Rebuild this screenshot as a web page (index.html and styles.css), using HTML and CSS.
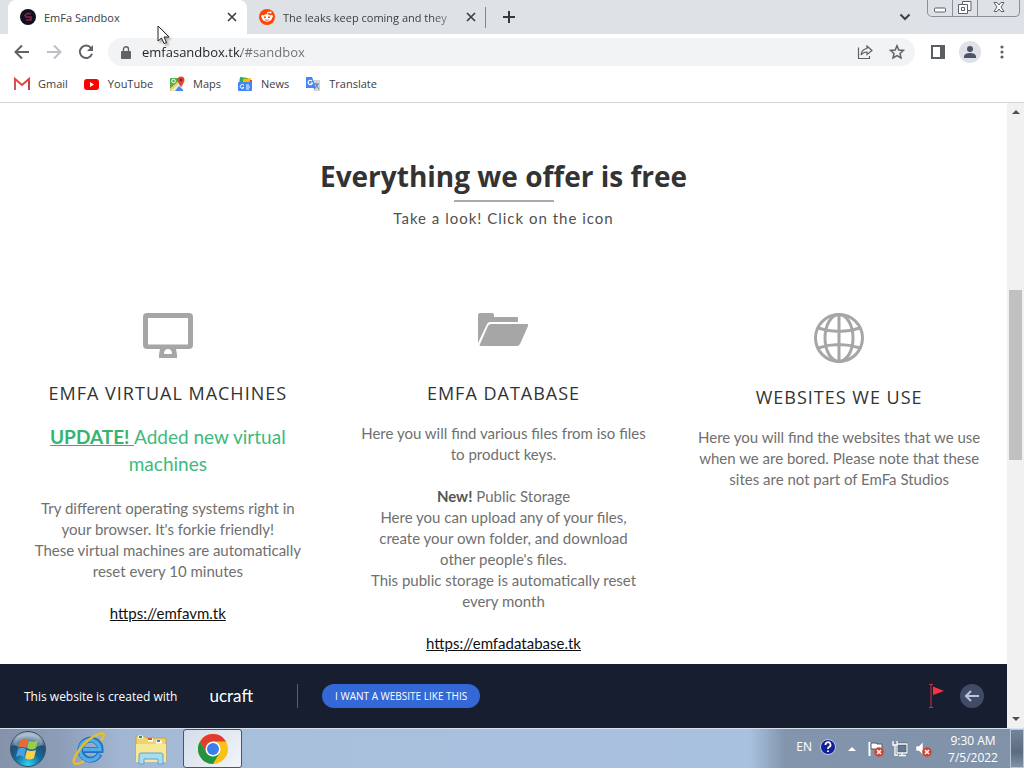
FILE: index.html
```html
<!DOCTYPE html>
<html lang="en">
<head>
    <meta charset="UTF-8">
    <meta name="viewport" content="width=device-width, initial-scale=1.0">
    <title>EmFa Sandbox</title>
    <link rel="stylesheet" href="styles.css">
</head>
<body>
    <header class="tabstrip">
        <div class="tab tab-active">
            <svg class="favicon" width="16" height="16" viewBox="0 0 16 16"><circle cx="8" cy="8" r="8" fill="#10101f"/><path d="M11 4.500H7.500L5 6.500L6 8H11V11H6" fill="none" stroke="#8c2445" stroke-width="1.500"/></svg>
            <span class="tab-title">EmFa Sandbox</span>
            <button class="tab-close" aria-label="Close tab"><svg width="10" height="10" viewBox="0 0 10 10"><path d="M1 1L9 9M9 1L1 9" stroke="#3c4043" stroke-width="1.700"/></svg></button>
        </div>
        <div class="tab">
            <svg class="favicon" width="16" height="16" viewBox="0 0 16 16"><circle cx="8" cy="8" r="8" fill="#ff4500"/><path d="M8 5.500L9 3L11 3.500" fill="none" stroke="#fff"/><circle cx="11.500" cy="3.500" r="1.100" fill="#fff"/><circle cx="3.500" cy="7.500" r="1.400" fill="#fff"/><circle cx="12.500" cy="7.500" r="1.400" fill="#fff"/><ellipse cx="8" cy="9" rx="5" ry="3.700" fill="#fff"/><circle cx="6" cy="8.300" r="1" fill="#ff4500"/><circle cx="10" cy="8.300" r="1" fill="#ff4500"/><path d="M6 10.700Q8 12 10 10.700" fill="none" stroke="#ff4500" stroke-width=".8"/></svg>
            <span class="tab-title tab-fade">The leaks keep coming and they</span>
            <button class="tab-close" aria-label="Close tab"><svg width="10" height="10" viewBox="0 0 10 10"><path d="M1 1L9 9M9 1L1 9" stroke="#3c4043" stroke-width="1.700"/></svg></button>
        </div>
        <button class="new-tab" aria-label="New tab"><svg width="12" height="12" viewBox="0 0 12 12"><path d="M6 0V12M0 6H12" stroke="#35383c" stroke-width="2"/></svg></button>
        <button class="tab-search" aria-label="Search tabs"><svg width="12" height="8" viewBox="0 0 12 8"><path d="M1.500 1.500L6 6L10.500 1.500" fill="none" stroke="#3c4043" stroke-width="2"/></svg></button>
        <div class="window-buttons">
            <button aria-label="Minimize"><svg width="12" height="18" viewBox="0 0 12 18"><rect x=".5" y="9" width="11" height="4" rx="1" fill="#fff" stroke="#5b616b"/></svg></button>
            <button aria-label="Restore"><svg width="14" height="18" viewBox="0 0 14 18"><path d="M4.500 2.500H13V11.500H9.500V14.500H.5V5.500H4.500Z" fill="#fff" stroke="#5b616b"/><path d="M4.500 5.500H9.500V11.500M3.500 8.500H6.500V11.500H3.500Z" fill="none" stroke="#5b616b"/></svg></button>
            <button class="window-close" aria-label="Close"><svg width="12" height="18" viewBox="0 0 12 18"><path d="M1 3.500H4L6 6L8 3.500H11L8 8L11 12.500H8L6 10L4 12.500H1L4 8Z" fill="#fff" stroke="#5b616b"/></svg></button>
        </div>
    </header>

    <nav class="toolbar">
        <button aria-label="Back"><svg width="16" height="16" viewBox="0 0 16 16"><path d="M15 8H2M8 1.500L1.500 8L8 14.500" fill="none" stroke="#5f6368" stroke-width="2"/></svg></button>
        <button aria-label="Forward"><svg width="16" height="16" viewBox="0 0 16 16"><path d="M1 8H14M8 1.500L14.500 8L8 14.500" fill="none" stroke="#bdc1c6" stroke-width="2"/></svg></button>
        <button aria-label="Reload"><svg width="16" height="16" viewBox="0 0 16 16"><path d="M13 4A6.200 6.200 0 1 0 14 9.700" fill="none" stroke="#5f6368" stroke-width="2"/><path d="M15 1V7H9Z" fill="#5f6368"/></svg></button>
        <div class="omnibox">
            <svg width="10" height="13" viewBox="0 0 10 13"><rect y="5" width="10" height="8" rx="1" fill="#5f6368"/><path d="M2.500 5V3.300A2.500 2.500 0 0 1 7.500 3.300V5" fill="none" stroke="#5f6368" stroke-width="1.400"/></svg>
            <input class="url" type="text" aria-label="Address" value="emfasandbox.tk/#sandbox">
            <button aria-label="Share"><svg width="16" height="16" viewBox="0 0 16 16"><path d="M1.500 3.500V14.500H12.500V12" fill="none" stroke="#5f6368" stroke-width="1.200"/><path d="M10 2L15 6.500L10 10.500V8Q6 8 4 11Q4.500 5.500 10 4.500Z" fill="none" stroke="#5f6368" stroke-width="1.200"/></svg></button>
            <button aria-label="Bookmark"><svg width="16" height="16" viewBox="0 0 16 16"><path d="M8 1.700L9.800 6L14.500 6.400L11 9.500L12 14L8 11.600L4 14L5 9.500L1.500 6.400L6.200 6Z" fill="none" stroke="#5f6368" stroke-width="1.500"/></svg></button>
        </div>
        <button class="side-panel" aria-label="Side panel"><svg width="14" height="14" viewBox="0 0 14 14"><rect x="1" y="1" width="12" height="12" fill="none" stroke="#5a5d62" stroke-width="2"/><rect x="9" y="1" width="4" height="12" fill="#5a5d62"/></svg></button>
        <button class="profile" aria-label="Profile"><svg width="22" height="22" viewBox="0 0 22 22"><circle cx="11" cy="11" r="11" fill="#dfe1e6"/><circle cx="11" cy="8" r="3" fill="#4c5365"/><path d="M5 17V15Q6 12 11 12T17 15V17Z" fill="#4c5365"/></svg></button>
        <button class="menu" aria-label="Menu"><svg width="4" height="14" viewBox="0 0 4 14" fill="#5f6368"><circle cx="2" cy="2" r="1.600"/><circle cx="2" cy="7" r="1.600"/><circle cx="2" cy="12" r="1.600"/></svg></button>
    </nav>

    <nav class="bookmarks">
        <a href="#gmail"><svg width="16" height="16" viewBox="0 0 16 16"><path d="M1 14V3L8 9L15 3V14" fill="none" stroke="#ea4335" stroke-width="2"/><path d="M1 5V14" stroke="#c75667" stroke-width="2"/><path d="M15 5V14" stroke="#b44b50" stroke-width="2"/></svg>Gmail</a>
        <a href="#youtube"><svg width="16" height="16" viewBox="0 0 16 16"><rect x="0" y="3" width="15" height="11" rx="3" fill="#f00"/><path d="M6 6L10 8.500L6 11Z" fill="#fff"/></svg>YouTube</a>
        <a href="#maps"><svg width="16" height="16" viewBox="0 0 16 16"><rect x="1" y="2" width="13" height="13" rx="1" fill="#4caf50"/><path d="M1 15L14 3V15Z" fill="#e8e8e8"/><path d="M6 15L10 10L14 14V15Z" fill="#4285f4"/><path d="M1 14L13 3" stroke="#fbd04b" stroke-width="2"/><circle cx="4.500" cy="5" r="1.800" fill="none" stroke="#fff"/><path d="M8.500 4A3.500 3.500 0 0 1 15.500 4Q15.500 6 12 11Q8.500 6 8.500 4Z" fill="#db4437"/><circle cx="12" cy="4" r="1.200" fill="#7e1d16"/></svg>Maps</a>
        <a href="#news"><svg width="16" height="16" viewBox="0 0 16 16"><path d="M3 1L11 2V8H2Z" fill="#34a853"/><path d="M6 3L14 2L13 9H6Z" fill="#fbbc04"/><path d="M13 4H15V9H12Z" fill="#ea4335"/><rect x="1" y="6" width="14" height="9" rx="1" fill="#4285f4"/><path d="M7 9.500A2 2 0 1 0 7 11.500H5.500M9 9H12M9 11H13M9 13H12" fill="none" stroke="#fff"/></svg>News</a>
        <a href="#translate"><svg width="16" height="16" viewBox="0 0 16 16"><path d="M6 4H15V15H9Z" fill="#cfd2d8"/><path d="M8 8H14M11 7V8Q12 11 14 13M13 8Q12 11 9 13" fill="none" stroke="#687d9f"/><path d="M1 1H7L11 12H1Z" fill="#4285f4"/><path d="M7 5A2.200 2.200 0 1 0 7.500 7H5.500" fill="none" stroke="#fff" stroke-width="1.200"/></svg>Translate</a>
    </nav>

    <div class="viewport">
        <div class="page">
            <main class="content">
                <h1>Everything we offer is free</h1>
                <hr class="rule">
                <p class="subtitle">Take a look! Click on the icon</p>

                <div class="offers">
                    <section class="offer">
                        <a class="offer-icon" href="#vm" aria-label="Virtual machines"><svg width="50" height="46" viewBox="0 0 50 46"><path fill-rule="evenodd" d="M4 0H46Q50 0 50 4V32Q50 36 46 36H33L34 42V45H16V42L17 36H4Q0 36 0 32V4Q0 0 4 0ZM5 5V31.500H45V5ZM21 41H29Q29 36 25 36T21 41Z" fill="#a6a6a6"/></svg></a>
                        <h2>EMFA VIRTUAL MACHINES</h2>
                        <p class="update"><strong>UPDATE! </strong>Added new virtual<br>machines</p>
                        <p>Try different operating systems right in<br>your browser. It's forkie friendly!<br>These virtual machines are automatically<br>reset every 10 minutes</p>
                        <p><a class="link" href="https://emfavm.tk">https://emfavm.tk</a></p>
                    </section>
                    <section class="offer">
                        <a class="offer-icon" href="#database" aria-label="Database"><svg width="50" height="46" viewBox="0 0 50 46" fill="#a6a6a6"><path d="M0 30V2Q0 0 2 0H14Q16 0 16 2V4H39Q40 4 40 5V9H12Q10 9 9 11Z"/><path d="M13 11H49Q51 11 50 13L42 31Q41 33 39 33H3Q1 33 2 31L10 13Q11 11 13 11Z"/></svg></a>
                        <h2>EMFA DATABASE</h2>
                        <p>Here you will find various files from iso files<br>to product keys.</p>
                        <p><strong>New!</strong> Public Storage<br>Here you can upload any of your files,<br>create your own folder, and download<br>other people's files.<br>This public storage is automatically reset<br>every month</p>
                        <p><a class="link" href="https://emfadatabase.tk">https://emfadatabase.tk</a></p>
                    </section>
                    <section class="offer">
                        <a class="offer-icon" href="#websites" aria-label="Websites"><svg width="50" height="50" viewBox="0 0 50 50" fill="none" stroke="#a6a6a6" stroke-width="3"><circle cx="25" cy="25" r="23.500"/><ellipse cx="25" cy="25" rx="14" ry="23.500"/><path d="M25 1V49M4 15Q25 22 46 15M4 35Q25 28 46 35"/></svg></a>
                        <h2>WEBSITES WE USE</h2>
                        <p>Here you will find the websites that we use<br>when we are bored. Please note that these<br>sites are not part of EmFa Studios</p>
                    </section>
                </div>
            </main>

            <footer class="promo">
                <span class="promo-text">This website is created with</span>
                <a class="ucraft" href="#ucraft">ucraft</a>
                <button class="promo-button">I WANT A WEBSITE LIKE THIS</button>
                <svg class="flag" width="15" height="24" viewBox="0 0 15 24"><path d="M0 .5H4M2 0V24M0 23.500H4" stroke="#c9303e" fill="none"/><path d="M4 2.500L15 7L4 11Z" fill="#fb3340"/></svg>
                <button class="promo-hide" aria-label="Hide"><svg width="24" height="24" viewBox="0 0 24 24"><circle cx="12" cy="12" r="12" fill="#414b65"/><path d="M19 12H6M11 7L6 12L11 17" fill="none" stroke="#b9c4dd" stroke-width="2"/></svg></button>
            </footer>
        </div>
        <div class="scrollbar">
            <svg width="8" height="4" viewBox="0 0 8 4"><path d="M0 4L4 0L8 4Z" fill="#505050"/></svg>
            <div class="scroll-track"><div class="scroll-thumb"></div></div>
            <svg width="8" height="4" viewBox="0 0 8 4"><path d="M0 0L4 4L8 0Z" fill="#505050"/></svg>
        </div>
    </div>

    <div class="taskbar">
        <button class="start" aria-label="Start">
            <svg width="38" height="38" viewBox="0 0 38 38">
                <defs>
                    <radialGradient id="orb" cx=".5" cy=".95" r=".85"><stop offset="0" stop-color="#2fd6f5"/><stop offset=".45" stop-color="#126b9b"/><stop offset=".8" stop-color="#244c6d"/><stop offset="1" stop-color="#a4b5c4"/></radialGradient>
                </defs>
                <circle cx="19" cy="19" r="17.500" fill="url(#orb)" stroke="#364e68"/>
                <path d="M4 15A15.500 15.500 0 0 1 34 15Q19 20 4 15Z" fill="#b7cbda" opacity=".45"/>
                <path d="M12 10Q15 7 19 10L17 18Q13 15 9 18Z" fill="#ee6930"/>
                <path d="M20 11Q25 13 29 10L27 18Q23 21 18 18Z" fill="#9acb4a"/>
                <path d="M9 19Q13 16 17 19L15 27Q11 24 7 27Z" fill="#4b9fe0"/>
                <path d="M18 20Q22 22 27 20L25 28Q20 31 16 28Z" fill="#fbd14b"/>
            </svg>
        </button>
        <button class="task" aria-label="Internet Explorer">
            <svg width="34" height="34" viewBox="0 0 34 34"><path d="M27.500 22A10 10 0 1 1 28.500 18H11" fill="none" stroke="#1f70bd" stroke-width="6"/><path d="M27 22.500A10 10 0 1 1 28 17.500H11" fill="none" stroke="#4eaee9" stroke-width="3.500"/><path d="M29 9Q36-1 27 2Q16 6 8 17Q-2 31 4 32Q8 32 12 29" fill="none" stroke="#e3bd32" stroke-width="2.500"/></svg>
        </button>
        <button class="task" aria-label="Explorer">
            <svg width="34" height="34" viewBox="0 0 34 34"><path d="M2 4H10L12 6H32V29H2Z" fill="#eed36f" stroke="#c3a64c"/><path d="M4 5H9M14 8H19M22 10H28" stroke="#fff" stroke-width="3"/><path d="M5 5H8" stroke="#329d3b" stroke-width="2"/><path d="M14 7H18" stroke="#d8592c" stroke-width="2"/><path d="M23 9H26" stroke="#2d8bc9" stroke-width="2"/><path d="M2 12H32V30H2Z" fill="#f8e797"/><path d="M5 32V23Q5 21 7 21H27Q29 21 29 23V32H24V27H10V32Z" fill="#a8dcee" stroke="#5aa7ca"/></svg>
        </button>
        <button class="task task-active" aria-label="Chrome">
            <svg width="30" height="30" viewBox="0 0 30 30"><circle cx="15" cy="15" r="15" fill="#fbc116"/><path d="M2 7.500A15 15 0 0 1 28 7.500H15L8.500 19Z" fill="#e33b2e"/><path d="M2 7.500L8.500 19L15 22.500L21.500 19L15 30A15 15 0 0 1 2 7.500Z" fill="#229342"/><circle cx="15" cy="15" r="7.500" fill="#fff"/><circle cx="15" cy="15" r="6" fill="#3b7ded"/></svg>
        </button>
        <div class="tray">
            <div class="language">
                <span>EN</span>
                <svg width="16" height="16" viewBox="0 0 16 16"><circle cx="8" cy="8" r="7.500" fill="#122099" stroke="#bdc9e6"/><path d="M5.500 6A2.500 2.500 0 1 1 9 8Q8 8.500 8 10M8 11.500V13" fill="none" stroke="#fff" stroke-width="1.800"/></svg>
            </div>
            <svg class="tray-more" width="8" height="4" viewBox="0 0 8 4"><path d="M0 4L4 0L8 4Z" fill="#fff"/></svg>
            <svg width="16" height="16" viewBox="0 0 16 16"><path d="M1.500 1V15" stroke="#fff" stroke-width="2"/><path d="M3 2H8L9 3H14V9H8L7 8H3Z" fill="#fff" stroke="#536174"/><circle cx="11" cy="11" r="4.800" fill="#d34334"/><path d="M9 9L13 13M13 9L9 13" stroke="#fff" stroke-width="1.500"/></svg>
            <svg width="16" height="16" viewBox="0 0 16 16"><path d="M5 3H15V12H5Z" fill="#647992" stroke="#3d4a5c" stroke-width="2.500"/><path d="M5 3H15V12H5ZM7 14.500H14M10 12V14M1 0V4H5V0M3 4V14H6" fill="none" stroke="#fff" stroke-width="1.300"/></svg>
            <svg width="16" height="16" viewBox="0 0 16 16"><path d="M0 5H3L7 1V14L3 10H0Z" fill="#fff" stroke="#75869c" stroke-width=".5"/><circle cx="11" cy="11" r="4.800" fill="#d34334"/><path d="M9 9L13 13M13 9L9 13" stroke="#fff" stroke-width="1.500"/></svg>
        </div>
        <div class="clock">9:30 AM<br>7/5/2022</div>
        <button class="show-desktop" aria-label="Show desktop"></button>
    </div>

    <svg class="cursor" width="14" height="20" viewBox="0 0 14 20"><path d="M1 1V16L4.500 13L7 18.500L9.500 17.500L7 12H12Z" fill="#fff" stroke="#222"/></svg>
</body>
</html>
```
FILE: styles.css
```css
* { box-sizing: border-box; }
body {
    margin: 0;
    height: 100vh;
    display: flex;
    flex-direction: column;
    overflow: hidden;
    background: #fff;
    font-family: "Open Sans", "Noto Sans", sans-serif;
    font-size: 12px;
    color: #3c4043;
}
button {
    border: none;
    background: none;
    padding: 0;
    font: inherit;
    color: inherit;
    display: flex;
    align-items: center;
    justify-content: center;
    flex-shrink: 0;
}
a { color: inherit; text-decoration: none; }
svg { display: block; flex-shrink: 0; }
p { margin: 0; }

/* Tabs */
.tabstrip {
    height: 34px;
    flex-shrink: 0;
    display: flex;
    background: #dee1e6;
    padding-left: 8px;
    font-size: 11px;
}
.tab {
    width: 239px;
    display: flex;
    align-items: center;
    gap: 8px;
    padding: 0 9px 0 12px;
    border-right: 1px solid transparent;
}
.tab:nth-child(2) {
    border-image: linear-gradient(transparent 8px, #80868b 8px, #80868b 27px, transparent 27px) 1;
    border-width: 0 1px 0 0;
    border-style: solid;
}
.tab-active {
    background: #fff;
    border-radius: 8px 8px 0 0;
}
.tab-title {
    flex: 1;
    overflow: hidden;
    white-space: nowrap;
}
.tab-fade {
    -webkit-mask-image: linear-gradient(to right, #000 150px, transparent 180px);
    mask-image: linear-gradient(to right, #000 150px, transparent 180px);
}
.new-tab { width: 46px; }
.tab-search { margin-left: auto; width: 44px; }
.window-buttons {
    display: flex;
    height: 17px;
    margin-right: 4px;
    border: 1px solid #8b9098;
    border-top: none;
    border-radius: 0 0 5px 5px;
}
.window-buttons button { width: 25px; border-right: 1px solid #8b9098; }
.window-buttons .window-close { width: 41px; border-right: none; }

/* Toolbar */
.toolbar {
    height: 36px;
    flex-shrink: 0;
    display: flex;
    align-items: center;
    gap: 16px;
    padding: 0 20px 0 14px;
}
.omnibox {
    flex: 1;
    height: 28px;
    display: flex;
    align-items: center;
    gap: 16px;
    border-radius: 14px;
    background: #f1f3f4;
    padding: 0 10px 0 13px;
    margin-left: -2px;
}
.url {
    flex: 1;
    min-width: 0;
    border: none;
    outline: none;
    padding: 0;
    margin-left: -5px;
    font: 13px "Open Sans", sans-serif;
    color: transparent;
    background: linear-gradient(to right, #202124 99px, #6b7075 99px);
    -webkit-background-clip: text;
    background-clip: text;
}
.profile { margin: 0 -2px; }
.menu { margin-left: 5px; }

.bookmarks {
    height: 33px;
    flex-shrink: 0;
    display: flex;
    gap: 16px;
    padding: 0 14px 5px;
    border-bottom: 1px solid #d5d7da;
    font-size: 11px;
}
.bookmarks a { display: flex; align-items: center; gap: 8px; }

/* Web page */
.viewport { flex: 1; min-height: 0; display: flex; }
.page { flex: 1; display: flex; flex-direction: column; min-width: 0; }
.content {
    flex: 1;
    min-height: 0;
    overflow: hidden;
    padding-top: 54px;
    text-align: center;
    font-family: Lato, sans-serif;
}
h1 {
    margin: 0;
    font: bold 28px/38px "Open Sans", sans-serif;
    color: #333;
}
.rule {
    width: 100px;
    height: 2px;
    margin: 5px auto 6px;
    border: none;
    background: #aaa;
}
.subtitle {
    font-size: 15px;
    line-height: 21px;
    letter-spacing: 1px;
    color: #505050;
}
.offers {
    display: grid;
    grid-template-columns: repeat(3, 1fr);
    margin-top: 84px;
}
.offer {
    font-size: 15px;
    line-height: 21px;
    color: #707070;
}
.offer-icon { display: flex; justify-content: center; }
.offer h2 {
    margin: 21px 0 17px;
    font: 18px/26px "Open Sans", sans-serif;
    letter-spacing: 1px;
    color: #333;
}
.offer p + p { margin-top: 21px; }
.offer strong { color: #555; }
.offer .update {
    font-size: 19px;
    line-height: 27px;
    color: #3dba7c;
}
.offer .update strong { color: #35b46f; text-decoration: underline; }
.link { color: #111; text-decoration: underline; }

.promo {
    height: 64px;
    flex-shrink: 0;
    display: flex;
    align-items: center;
    padding: 0 23px 0 24px;
    background: #161e30;
    color: #fff;
}
.ucraft {
    font: 17px/24px Lato, sans-serif;
    margin-left: 32px;
    padding-right: 44px;
    border-right: 1px solid #596071;
}
.promo-button {
    height: 24px;
    margin-left: 24px;
    padding: 0 13px;
    border-radius: 12px;
    background: #3468d6;
    font-size: 10px;
}
.flag { margin-left: auto; margin-right: 16px; }

.scrollbar {
    width: 17px;
    display: flex;
    flex-direction: column;
    align-items: center;
    gap: 8px;
    padding: 7px 0;
    background: #f1f1f1;
}
.scroll-track {
    flex: 1;
    align-self: stretch;
    padding: 0 2px;
}
.scroll-thumb {
    height: 29%;
    margin-top: 168px;
    background: #c1c1c1;
}

/* Taskbar */
.taskbar {
    height: 40px;
    flex-shrink: 0;
    display: flex;
    align-items: center;
    border-top: 1px solid #d5e1ee;
    background: linear-gradient(to right, #8492aa 0, #8d9db8 60px, #a1b6d2 120px, #a8c0dc 260px, #a8c1de 750px, #8295ad 785px, #8092a8 100%);
    color: #fff;
}
.start { width: 55px; }
.task { width: 60px; height: 39px; margin-left: 4px; }
.task + .task { margin-left: 2px; }
.task.task-active {
    width: 59px;
    border: 1px solid #47566b;
    border-radius: 3px;
    background: linear-gradient(135deg, #d5dde9, #f2f5f9);
}
.tray {
    margin-left: auto;
    display: flex;
    align-items: center;
    gap: 8px;
}
.language {
    display: flex;
    align-items: center;
    gap: 8px;
    padding-bottom: 4px;
}
.tray-more { margin: 0 4px; }
.clock {
    width: 78px;
    padding-left: 4px;
    text-align: center;
    line-height: 17px;
}
.show-desktop {
    width: 14px;
    height: 39px;
    border: 1px solid #b9c6d4;
    background: linear-gradient(#74849a, #5d6b80 60%, #8292a6);
}

.cursor {
    position: absolute;
    left: 157px;
    top: 25px;
    filter: drop-shadow(2px 2px 1px rgba(0,0,0,0.3));
}
```
